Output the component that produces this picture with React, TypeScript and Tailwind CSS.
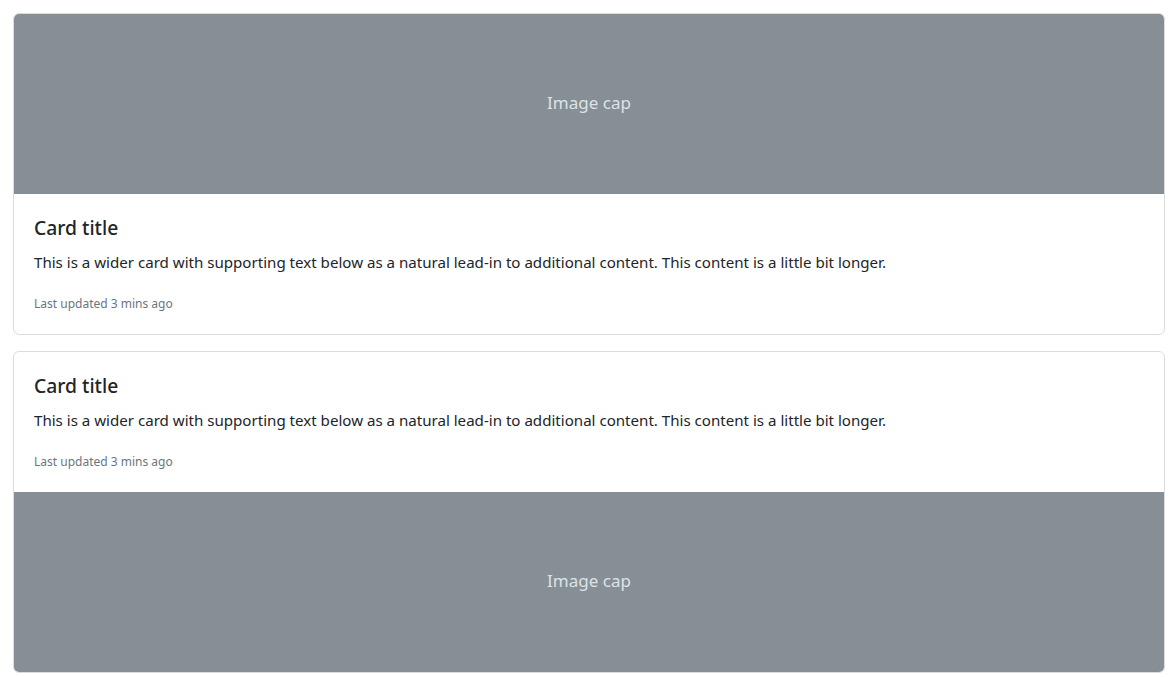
const font = { fontFamily: '"Noto Sans", "Open Sans", sans-serif' }

const ImageCap = ({ position }: { position: 'top' | 'bottom' }) => (
  <div
    className={`h-[180px] bg-[#868e96] flex items-center justify-center text-[#dee2e6] text-[17px] pb-[2px] ${
      position === 'top' ? 'rounded-t-[5px]' : 'rounded-b-[5px]'
    }`}
  >
    Image cap
  </div>
)

const CardBody = () => (
  <div className="px-5 pt-5 pb-5 text-[#212529]">
    <h5 className="text-[19.3px] leading-6 font-medium mb-3 pt-[2px] h-6">Card title</h5>
    <p className="text-[15.1px] leading-6 mb-4">
      This is a wider card with supporting text below as a natural lead-in to additional content. This content is a little bit longer.
    </p>
    <p className="text-[12px] leading-[20px] pt-1 h-6 text-[#6c757d]">Last updated 3 mins ago</p>
  </div>
)

export default function App() {
  return (
    <div className="min-h-screen bg-white pl-[13px] pr-[11px] pt-[13px]" style={font}>
      <div className="border border-[#dcdcdc] rounded-md bg-white mb-4">
        <ImageCap position="top" />
        <CardBody />
      </div>
      <div className="border border-[#dcdcdc] rounded-md bg-white">
        <CardBody />
        <ImageCap position="bottom" />
      </div>
    </div>
  )
}
